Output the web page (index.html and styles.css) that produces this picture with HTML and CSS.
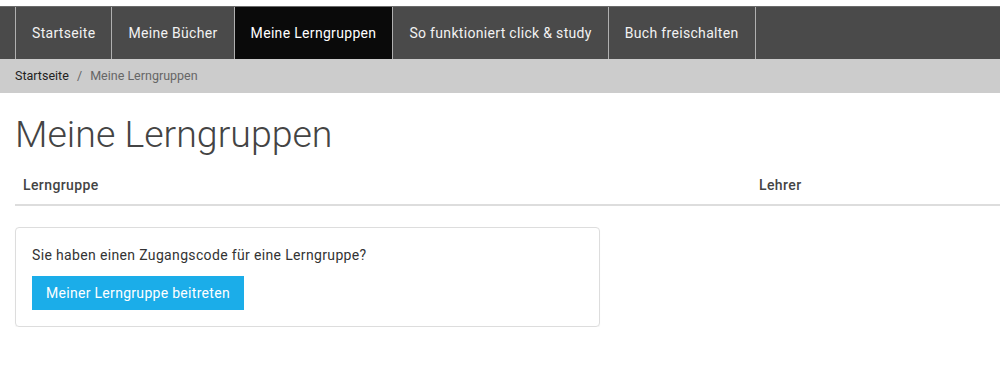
FILE: index.html
```html
<!DOCTYPE html>
<html lang="de">
<head>
    <meta charset="UTF-8">
    <title>Meine Lerngruppen</title>
    <link rel="stylesheet" href="styles.css">
</head>
<body>
<nav class="main-nav">
    <ul>
        <li><a href="#">Startseite</a></li>
        <li><a href="#">Meine Bücher</a></li>
        <li class="active"><a href="#">Meine Lerngruppen</a></li>
        <li><a href="#">So funktioniert click &amp; study</a></li>
        <li><a href="#">Buch freischalten</a></li>
    </ul>
</nav>
<div class="breadcrumb">
    <a href="#">Startseite</a>
    <span class="sep">/</span>
    <span class="current">Meine Lerngruppen</span>
</div>
<div class="container">
    <h1>Meine Lerngruppen</h1>
    <table class="groups">
        <thead>
            <tr>
                <th class="col-group">Lerngruppe</th>
                <th>Lehrer</th>
            </tr>
        </thead>
    </table>
    <div class="join-box">
        <p>Sie haben einen Zugangscode für eine Lerngruppe?</p>
        <button class="btn-join">Meiner Lerngruppe beitreten</button>
    </div>
</div>
</body>
</html>
```

FILE: styles.css
```css
* { box-sizing: border-box; }
body {
    margin: 0;
    font-family: Roboto, "Liberation Sans", Arial, sans-serif;
    font-size: 14px;
    letter-spacing: 0.35px;
    color: #333;
    background: #fff;
    overflow: hidden;
}
a {
    text-decoration: none;
}
.main-nav {
    margin-top: 6px;
    background: #4a4a4a;
    border-top: 1px solid #6a6a6a;
}
.main-nav ul {
    list-style: none;
    margin: 0;
    padding: 0 0 0 15px;
    display: flex;
}
.main-nav li {
    border-left: 1px solid #b0b0b0;
}
.main-nav li:last-child {
    border-right: 1px solid #b0b0b0;
}
.main-nav li a {
    display: block;
    height: 52px;
    line-height: 52px;
    padding: 0 16px;
    color: #f2f2f2;
    font-size: 14px;
    letter-spacing: 0.32px;
}
.main-nav li.active a {
    background: #0a0a0a;
    color: #fff;
}
.breadcrumb {
    background: #cccccc;
    height: 34px;
    line-height: 34px;
    padding: 0 15px;
    font-size: 12.5px;
    letter-spacing: 0;
}
.breadcrumb a {
    color: #222;
}
.breadcrumb .sep {
    color: #666;
    padding: 0 5px;
}
.breadcrumb .current {
    color: #666;
}
.container {
    padding: 0 15px;
}
h1 {
    font-weight: 300;
    font-size: 37.5px;
    letter-spacing: 0;
    color: #444;
    margin: 21px 0 14px;
    line-height: 1.1;
}
.groups {
    width: 1000px;
    border-collapse: collapse;
    margin-bottom: 21px;
}
.groups th {
    text-align: left;
    font-weight: 500;
    font-size: 14px;
    color: #444;
    padding: 8px 8px 11px;
    border-bottom: 2px solid #ddd;
    letter-spacing: 0.4px;
}
.groups th.col-group {
    width: 736px;
}
.join-box {
    width: 585px;
    border: 1px solid #ddd;
    border-radius: 4px;
    padding: 18px 16px 16px;
    box-shadow: 0 1px 1px rgba(0, 0, 0, 0.05);
}
.join-box p {
    margin: 1px 0 13px;
    color: #333;
}
.btn-join {
    background: #1bade9;
    color: #fff;
    border: none;
    font-family: inherit;
    font-size: 14px;
    letter-spacing: 0.3px;
    padding: 0 14px;
    height: 34px;
    cursor: pointer;
}
```
